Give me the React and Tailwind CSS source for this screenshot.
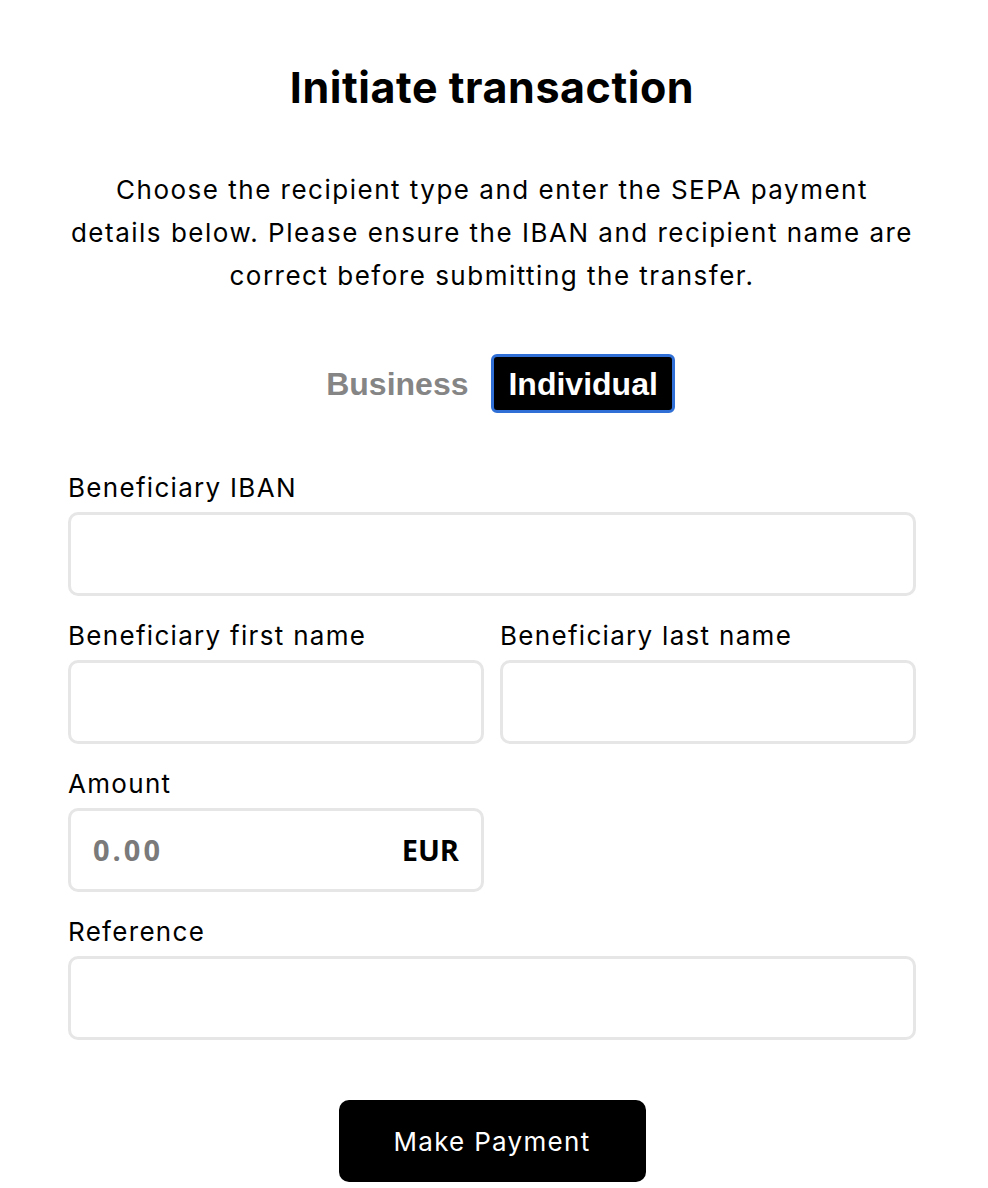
import { useState } from 'react'

function Field({ label, className = '', children }) {
  return (
    <div className={`flex flex-col ${className}`}>
      <label className="text-[26px] leading-[32px] tracking-[1.3px] text-black mb-[8px]">{label}</label>
      {children}
    </div>
  )
}

function Input() {
  return (
    <input
      type="text"
      className="h-[84px] w-full rounded-[10px] border-[3px] border-[#e6e6e6] bg-white px-[22px] text-[26px] outline-none"
    />
  )
}

export default function App() {
  const [type, setType] = useState('individual')

  const tab = active =>
    `h-[59px] rounded-[6px] px-[14px] border-[3px] ${active ? 'bg-black text-white border-[#2f6fd6]' : 'text-[#858585] border-transparent'}`

  return (
    <div className="min-h-screen bg-white font-['Inter',sans-serif] text-black">
      <div className="ml-[68px] w-[848px] pt-[60px] pb-[6px]">
        <h1 className="text-center text-[43px] leading-[54px] font-bold tracking-[0.55px]">Initiate transaction</h1>

        <p className="mt-[54px] text-center text-[26px] leading-[43px] tracking-[1.5px]">
          Choose the recipient type and enter the SEPA payment
          <br />
          details below. Please ensure the IBAN and recipient name are
          <br />
          correct before submitting the transfer.
        </p>

        <div className="mt-[57px] flex items-center justify-center gap-[6px] font-['Liberation_Sans',Arial,sans-serif] text-[32px] font-bold">
          <button onClick={() => setType('business')} className={tab(type === 'business')}>
            Business
          </button>
          <button onClick={() => setType('individual')} className={tab(type === 'individual')}>
            Individual
          </button>
        </div>

        <div className="mt-[59px] flex flex-col gap-[24px]">
          <Field label="Beneficiary IBAN">
            <Input />
          </Field>

          <div className="grid grid-cols-2 gap-[16px]">
            <Field label="Beneficiary first name">
              <Input />
            </Field>
            <Field label="Beneficiary last name">
              <Input />
            </Field>
          </div>

          <div className="grid grid-cols-2 gap-[16px]">
            <Field label="Amount">
              <div className="flex h-[84px] items-center justify-between rounded-[10px] border-[3px] border-[#e6e6e6] px-[22px] font-['Open_Sans',sans-serif] text-[29px] font-bold">
                <span className="text-[#7a7a7a] tracking-[3px]">0.00</span>
                <span>EUR</span>
              </div>
            </Field>
          </div>

          <Field label="Reference">
            <Input />
          </Field>
        </div>

        <div className="mt-[60px] flex justify-center">
          <button className="h-[82px] w-[307px] rounded-[10px] bg-black text-[26px] tracking-[1.3px] text-white">Make Payment</button>
        </div>
      </div>
    </div>
  )
}
